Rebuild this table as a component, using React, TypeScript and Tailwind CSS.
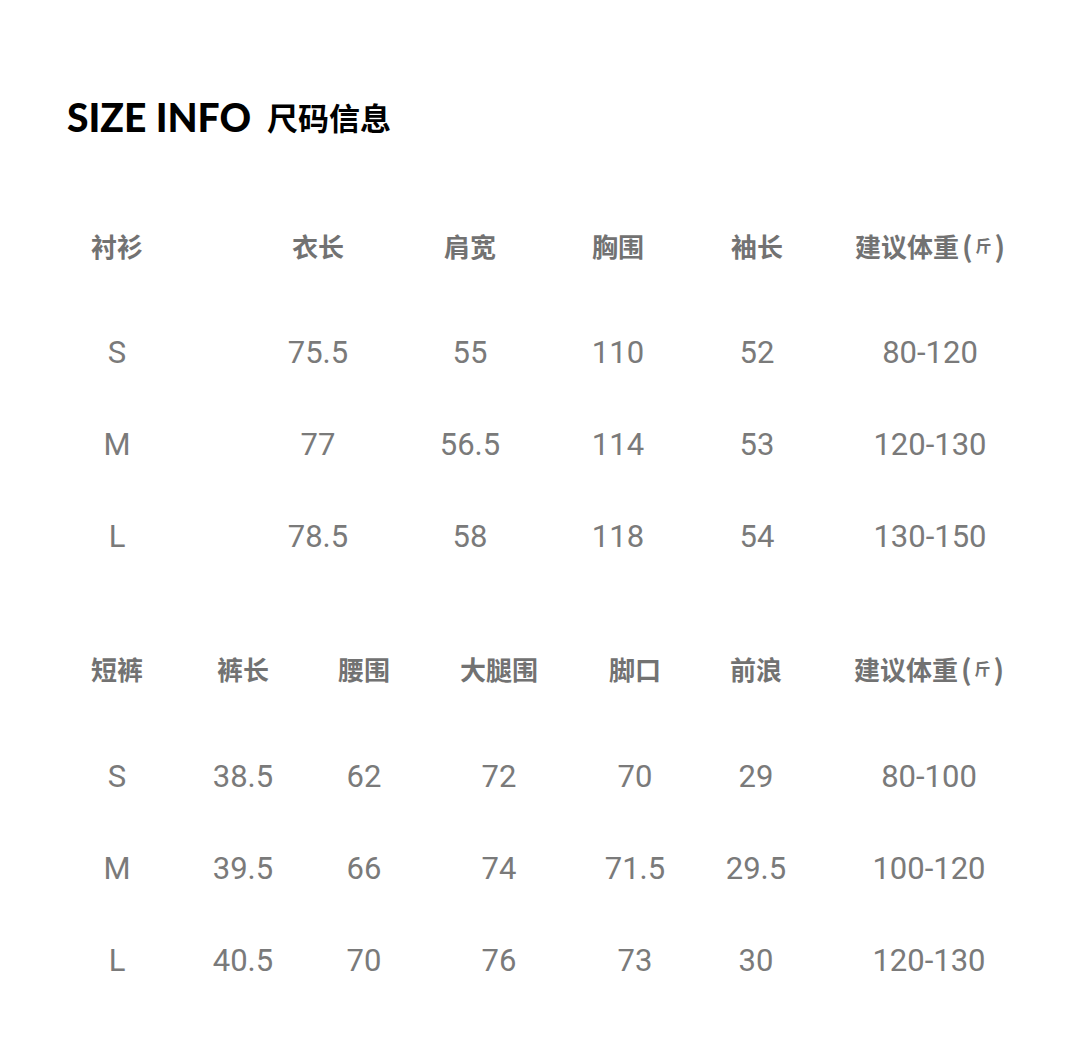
import React from 'react';

// cell spacing for each table, written out so Tailwind picks them up
const shirtCols = [
  'w-[100px]',
  'ml-[101px] w-[100px]',
  'ml-[52px] w-[100px]',
  'ml-[48px] w-[100px]',
  'ml-[39px] w-[100px]',
  'ml-[33px] w-[180px]',
];

const shortsCols = [
  'w-[100px]',
  'ml-[26px] w-[100px]',
  'ml-[21px] w-[100px]',
  'ml-[35px] w-[100px]',
  'ml-[36px] w-[100px]',
  'ml-[21px] w-[100px]',
  'ml-[33px] w-[180px]',
];

const shirt = {
  headers: ['衬衫', '衣长', '肩宽', '胸围', '袖长'],
  rows: [
    ['S', '75.5', '55', '110', '52', '80-120'],
    ['M', '77', '56.5', '114', '53', '120-130'],
    ['L', '78.5', '58', '118', '54', '130-150'],
  ],
};

const shorts = {
  headers: ['短裤', '裤长', '腰围', '大腿围', '脚口', '前浪'],
  rows: [
    ['S', '38.5', '62', '72', '70', '29', '80-100'],
    ['M', '39.5', '66', '74', '71.5', '29.5', '100-120'],
    ['L', '40.5', '70', '76', '73', '30', '120-130'],
  ],
};

const cjk = "font-['Noto_Sans_CJK_SC',sans-serif]";

function WeightHeader() {
  return (
    <span className="flex items-center whitespace-nowrap">
      建议体重
      <span className="ml-[3px] text-[28px] font-bold">(</span>
      <span className="mx-[3px] text-[16px]">斤</span>
      <span className="text-[28px] font-bold">)</span>
    </span>
  );
}

function SizeTable({ cols, headers, rows, headerTop, rowsTop }: {
  cols: string[];
  headers: string[];
  rows: string[][];
  headerTop: string;
  rowsTop: string;
}) {
  return (
    <div>
      <div className={`flex h-[60px] items-center pl-[67px] ${headerTop}`}>
        {headers.map((h, i) => (
          <div key={h} className={`flex justify-center text-[26px] font-bold text-[#727272] ${cjk} ${cols[i]}`}>
            {h}
          </div>
        ))}
        <div className={`flex justify-center text-[26px] font-bold text-[#727272] ${cjk} ${cols[cols.length - 1]}`}>
          <WeightHeader />
        </div>
      </div>
      <div className={rowsTop}>
        {rows.map((r) => (
          <div key={r[0]} className="flex h-[92px] items-center pl-[67px]">
            {r.map((v, i) => (
              <div
                key={i}
                className={`flex justify-center whitespace-nowrap font-['Roboto',sans-serif] text-[31px] text-[#7a7a7a] ${cols[i]}`}
              >
                {v}
              </div>
            ))}
          </div>
        ))}
      </div>
    </div>
  );
}

export default function App() {
  return (
    <div className="h-[1055px] w-[1080px] overflow-hidden bg-white pt-[93px]">
      <div className="flex h-[48px] items-center pl-[67px]">
        <span className="font-['Lato',sans-serif] text-[39px] font-black text-black">SIZE INFO</span>
        <span className={`ml-[16px] text-[31px] font-bold text-black ${cjk}`}>尺码信息</span>
      </div>

      <SizeTable cols={shirtCols} headers={shirt.headers} rows={shirt.rows} headerTop="mt-[74px]" rowsTop="mt-[32px]" />
      <SizeTable cols={shortsCols} headers={shorts.headers} rows={shorts.rows} headerTop="mt-[55px]" rowsTop="mt-[33px]" />
    </div>
  );
}
